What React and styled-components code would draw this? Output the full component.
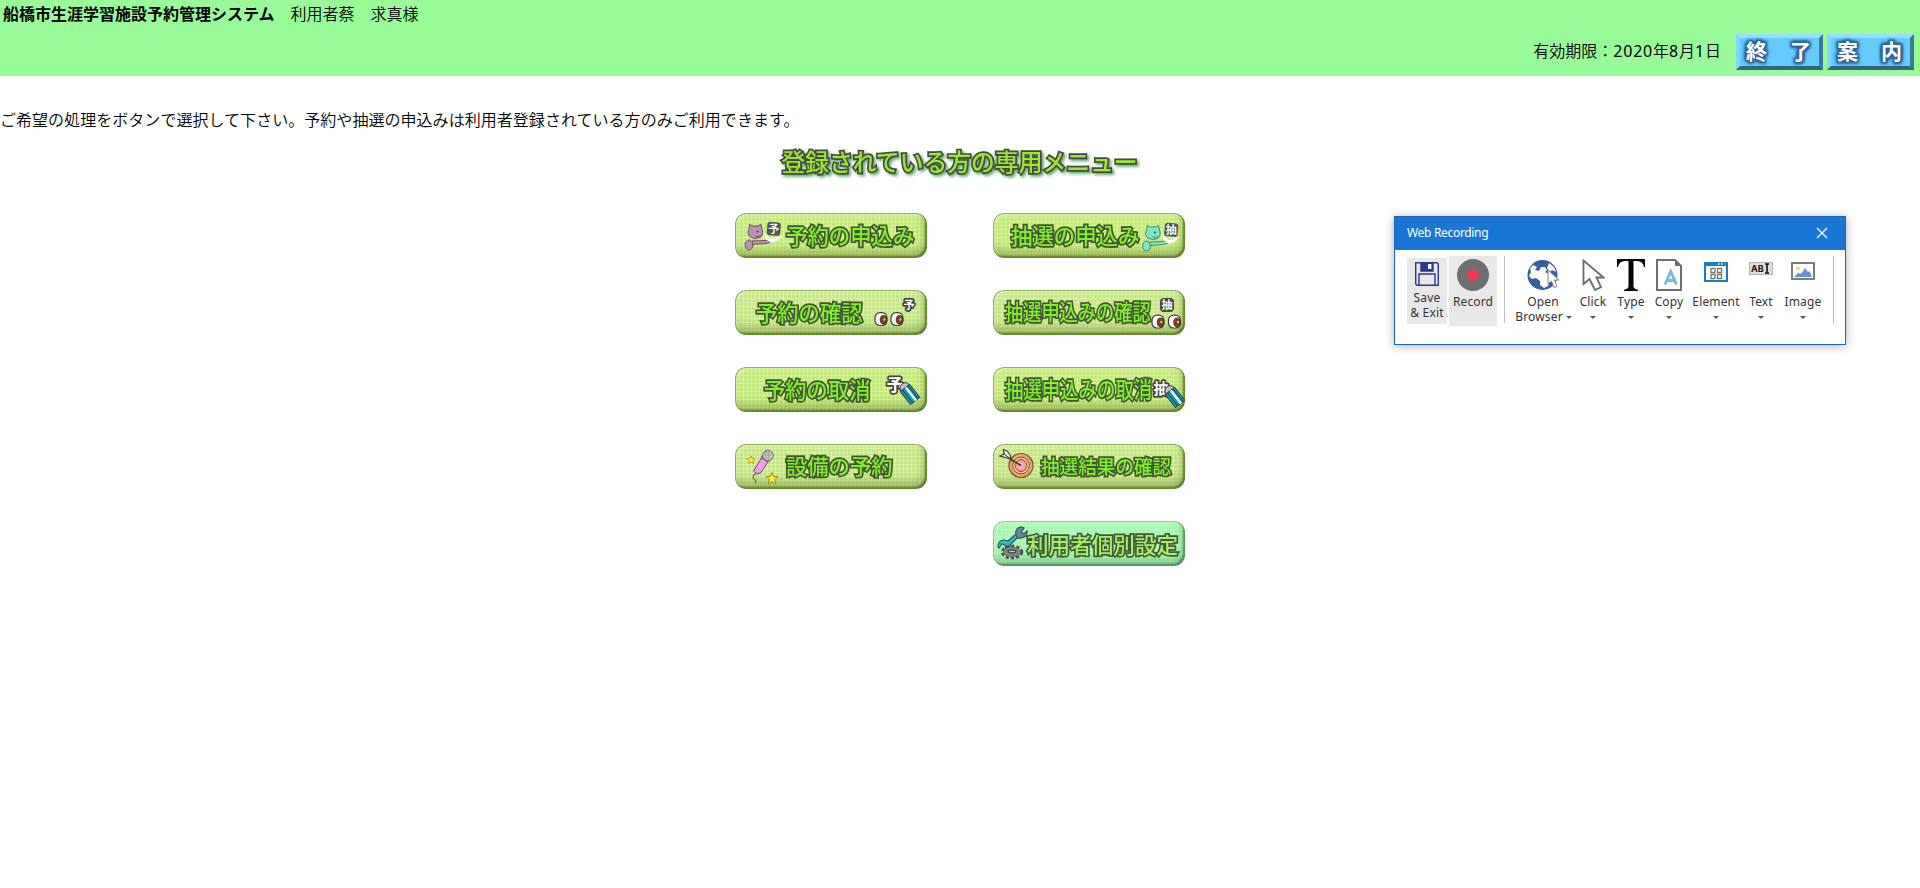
import React from 'react';
import styled, { createGlobalStyle } from 'styled-components';

const GlobalStyle = createGlobalStyle`
  html, body { margin: 0; padding: 0; background: #fff; }
  body {
    min-height: 888px;
    color: #000;
    font-family: "Noto Sans CJK JP", sans-serif;
    font-size: 16px;
    font-weight: 350;
    line-height: 24px;
    overflow: hidden;
  }
  button { font: inherit; margin: 0; padding: 0; }
`;

const Header = styled.header`
  box-sizing: border-box;
  height: 76px;
  padding: 1px 6px 6px 3px;
  background: #98fb98;
  display: flex;
  flex-direction: column;
  justify-content: space-between;
`;

const TitleRow = styled.div`
  display: flex;
  gap: 16px;
  white-space: pre;
`;

const SystemName = styled.strong`
  font-weight: 700;
`;

const SessionRow = styled.div`
  display: flex;
  justify-content: flex-end;
  align-items: center;
  gap: 4px;
`;

const Expiry = styled.span`
  margin-right: 11px;
  padding-bottom: 4px;
`;

const Digits = styled.span`
  font-family: "Noto Sans", sans-serif;
  font-weight: 400;
  letter-spacing: 0.8px;
`;

const BevelButton = styled.button`
  box-sizing: border-box;
  width: 87px;
  height: 36px;
  border: 4px solid;
  border-color: #99ddff #3d7a99 #336680 #84d6ff;
  background: #66ccff;
  display: flex;
  align-items: center;
  justify-content: space-between;
  padding: 0 8px 4px 6px;
  color: #fff;
  font-size: 21px;
  line-height: 28px;
  font-weight: 700;
  text-shadow: 0 0 2px #336699, 0 0 3px #336699, 1px 1px 2px #336699, -1px -1px 2px #336699,
    1px -1px 2px #336699, -1px 1px 2px #336699, 0 0 4px #336699, 2px 2px 3px #336699,
    2px -2px 3px #336699, -2px 2px 3px #336699, -2px -2px 3px #336699, 0 0 4px #336699;
`;

const Main = styled.main`
  display: flex;
  flex-direction: column;
`;

const Guide = styled.p`
  margin: 31px 0 0;
  letter-spacing: 0.04px;
`;

const MenuTitle = styled.h1`
  align-self: center;
  margin: 15px 1px 0 0;
  height: 30px;
  font-size: 23.8px;
  line-height: 30px;
  font-weight: 500;
  color: #99e633;
  -webkit-text-stroke: 3.4px #444b3d;
  paint-order: stroke fill;
  filter: drop-shadow(2px 2px 1.5px rgba(50, 140, 60, 0.75));
`;

const MenuGrid = styled.div`
  align-self: center;
  margin-top: 37px;
  display: grid;
  grid-template-columns: 192px 192px;
  grid-auto-rows: 45px;
  gap: 32px 66px;
`;

const MenuButton = styled.button`
  position: relative;
  grid-column: ${(p) => p.$col};
  width: 192px;
  height: 45px;
  border: 0;
  border-radius: 11px;
  text-align: left;
  background:
    repeating-linear-gradient(90deg, rgba(255,255,255,0.3) 0 1px, transparent 1px 4px),
    repeating-linear-gradient(0deg, rgba(255,255,255,0.3) 0 1px, transparent 1px 4px),
    ${(p) => (p.$mint ? '#a5f5b0' : '#c6e880')};
  box-shadow:
    inset 0 0 0 1px ${(p) => (p.$mint ? 'rgba(80,150,90,.5)' : 'rgba(95,145,40,.65)')},
    inset 2px 2px 3px rgba(255,255,255,0.45),
    inset -2px -2px 2px ${(p) => (p.$mint ? 'rgba(30,90,45,.55)' : 'rgba(55,85,15,.65)')},
    inset -3px -8px 8px ${(p) => (p.$mint ? 'rgba(65,120,75,.35)' : 'rgba(90,115,40,.42)')};
`;

const MenuLabel = styled.span`
  display: block;
  width: max-content;
  margin-left: ${(p) => p.$left}px;
  margin-top: ${(p) => p.$top - 2}px;
  font-size: ${(p) => p.$size}px;
  line-height: 30px;
  font-weight: 500;
  color: ${(p) => (p.$mint ? '#a8ee66' : '#7ef030')};
  -webkit-text-stroke: 3.4px ${(p) => (p.$mint ? '#3f5b3b' : '#425430')};
  paint-order: stroke fill;
  transform: scaleX(${(p) => p.$pitch / p.$size});
  transform-origin: left center;
`;

const Art = styled.svg`
  position: absolute;
  inset: 0;
  width: 192px;
  height: 45px;
  overflow: visible;
`;

const Stamp = styled.text`
  font-family: "Noto Sans CJK JP", sans-serif;
  font-weight: 700;
  fill: #fff;
  stroke: #444;
  stroke-width: ${(p) => p.$outline || 3.5}px;
  stroke-linejoin: round;
  paint-order: stroke fill;
  text-anchor: middle;
`;

const Mascot = ({ x = 0, y = 0, color, edge, mark }) => (
  <g transform={`translate(${x} ${y})`} stroke={edge} strokeWidth="1" strokeLinejoin="round">
    <path d="M17 28L30 27.5L36 26L37.5 28.5L31 30.5L17 31.5Z" fill={color} />
    <ellipse cx="14" cy="32" rx="3.8" ry="5" fill={color} />
    <path d="M14 16L14.5 11.5L18 13H22.5L26 11.5L27 16Q29 22 25 24.5Q20 27 15.5 24Q11.5 21 14 16Z" fill={color} />
    <path d="M20 23Q23 24.5 26 22.5" fill="none" />
    <circle cx="22.5" cy="18.5" r="0.9" fill="#333" stroke="none" />
    <path d="M29 19.5L32 23L36 26L47 23L41 28.5L36 29.5L31 26Z" fill="#fff" stroke="#e8efe0" />
    <rect x="32" y="9" width="13.5" height="13.5" rx="3" fill="#555" stroke="none" transform="rotate(5 38 16)" />
    <Stamp x="38.7" y="19.8" fontSize="11" $outline={0.5}>{mark}</Stamp>
  </g>
);

const Eyes = ({ x, y, gap }) => (
  <g>
    {[0, gap].map((dx) => (
      <g key={dx} transform={`translate(${x + dx} ${y})`}>
        <rect x="-6" y="-6.3" width="12" height="12.8" rx="5" fill="#fff" stroke="#3a4035" strokeWidth="1.2" />
        <ellipse cx="2.5" cy="0.8" rx="3.3" ry="4.4" fill="#824018" stroke="#312014" strokeWidth="0.7" />
        <rect x="2.6" y="-0.6" width="1.6" height="2.2" rx="0.6" fill="#fff" />
      </g>
    ))}
  </g>
);

const Eraser = ({ x, y }) => (
  <g transform={`translate(${x} ${y}) rotate(-38)`} stroke="#334" strokeWidth="0.9">
    <path d="M-5.5 0Q-4 -5 0 -5Q5 -5 5.5 0Z" fill="#bfc3c3" />
    <rect x="-6" y="0" width="12" height="16.5" fill="#15979d" />
    <rect x="-0.2" y="0" width="2.4" height="16.5" fill="#fff" stroke="none" />
    <path d="M-3.2 0V16.5M3.8 0V16.5" stroke="#083f66" />
  </g>
);

const Star = ({ x, y, s }) => (
  <path
    transform={`translate(${x} ${y}) scale(${s})`}
    d="M0 -6L1.7 -2L6 -1.8L2.7 1L3.8 5.4L0 3L-3.8 5.4L-2.7 1L-6 -1.8L-1.7 -2Z"
    fill="#ffed39"
    stroke="#a38a17"
    strokeWidth="1"
  />
);

const Microphone = () => (
  <g>
    <path d="M22 29Q16 32 19 35Q22 37 20 39" fill="none" stroke="#666" strokeWidth="1.2" />
    <path d="M26.5 14L33 18L25.5 29Q21 31 18.5 27Z" fill="#ff9bef" stroke="#555" />
    <path d="M26 13L29 10L36 15L33 18.5Z" fill="#aaa" stroke="#555" strokeWidth=".7" />
    <circle cx="33" cy="11.5" r="5.3" fill="#d5d5cf" stroke="#666" />
    <path d="M28 11H38M29 8.5H37M29 14H37M31 6.5V16M34 6.5V16" stroke="#888" strokeWidth=".6" />
    <Star x={16} y={16} s={0.7} />
    <Star x={37} y={34.5} s={1} />
  </g>
);

const Target = () => (
  <g fill="none">
    <circle cx="28" cy="21.5" r="12" fill="#ff9b66" stroke="#665442" strokeWidth="1.2" />
    <circle cx="28" cy="21.5" r="8.3" fill="#ffd9a0" stroke="#665442" />
    <circle cx="28" cy="21.5" r="6" fill="#ff9b66" stroke="#665442" />
    <circle cx="28" cy="21.5" r="3.4" fill="#ffa6cc" stroke="#ffa6cc" />
    <path d="M17 15L28 21.5" stroke="#333" strokeWidth="1.5" />
    <path d="M18 15L7 12L11 10L10.5 5.5Q17 7 18 15Z" fill="#edf5df" stroke="#333" strokeWidth="1.2" />
    <path d="M11 10L18 15" stroke="#333" />
  </g>
);

const Tools = () => (
  <g>
    <path
      d="M5 26Q5 19 11 19L15 20L23 13Q22 7 28 6L31 7L28 11L31 13L34 10Q34 17 27 17L24 17L17 24Q18 29 13 28L12 24L9 23L6 27Z"
      fill="#2dbbc5"
      stroke="#36535a"
      strokeWidth="1.2"
    />
    <path d="M23 13Q22 7 28 6L31 7L28 11L31 13L34 10Q34 17 27 17L24 17Z" fill="#608b96" stroke="#36535a" />
    <ellipse cx="19" cy="31" rx="9.5" ry="5.6" fill="none" stroke="#444c4c" strokeWidth="3.5" strokeDasharray="3 2" />
    <ellipse cx="19" cy="31" rx="8.5" ry="4.8" fill="#7c8585" stroke="#666e6e" strokeWidth="1" />
    <ellipse cx="19" cy="30.5" rx="4" ry="1.3" fill="#a7d9a9" stroke="#3d4545" strokeWidth="1.3" />
  </g>
);

const MENU = [
  { col: 1, text: '予約の申込み', left: 51, top: 0, size: 21.5, pitch: 21.4,
    art: <Mascot color="#bb92b2" edge="#69505f" mark="予" /> },
  { col: 2, text: '抽選の申込み', left: 18, top: 0, size: 21.5, pitch: 21.4,
    art: <Mascot x={139.5} y={1} color="#7de8c4" edge="#45886e" mark="抽" /> },
  { col: 1, text: '予約の確認', left: 21, top: 1, size: 21.5, pitch: 21.3,
    art: <><Eyes x={146} y={29} gap={16} /><Stamp x="174" y="19" fontSize="11">予</Stamp></> },
  { col: 2, text: '抽選申込みの確認', left: 12, top: -1, size: 21.5, pitch: 18.2,
    art: <><rect x="167" y="8" width="14" height="14" rx="4" fill="#444b3c" /><Stamp x="174" y="19" fontSize="11" $outline={0.6}>抽</Stamp><Eyes x={165} y={31.5} gap={16.5} /></> },
  { col: 1, text: '予約の取消', left: 29, top: 1, size: 21.5, pitch: 21.3,
    art: <><Stamp x="160" y="23.5" fontSize="17">予</Stamp><Eraser x={170} y={21} /></> },
  { col: 2, text: '抽選申込みの取消', left: 12, top: -1, size: 22.5, pitch: 18.4,
    art: <><Stamp x="168" y="26.5" fontSize="15">抽</Stamp><Eraser x={177} y={24} /></> },
  { col: 1, text: '設備の予約', left: 51, top: -1, size: 21, pitch: 21.3, art: <Microphone /> },
  { col: 2, text: '抽選結果の確認', left: 48, top: 0, size: 19.5, pitch: 18.6, art: <Target /> },
  { col: 2, text: '利用者個別設定', left: 34, top: 2, size: 21.7, pitch: 21.6, mint: true, art: <Tools /> },
];

const RecorderWindow = styled.section`
  position: absolute;
  left: 1394px;
  top: 216px;
  box-sizing: border-box;
  width: 452px;
  height: 129px;
  border: 1px solid #1769b5;
  background: #fff;
  box-shadow: 0 1px 9px rgba(0, 0, 0, 0.32);
  font-family: "Noto Sans", sans-serif;
  font-weight: 400;
  font-size: 12px;
  line-height: 15px;
  color: #333;
`;

const RecorderTitle = styled.div`
  box-sizing: border-box;
  height: 33px;
  padding: 0 17px 2px 12px;
  background: #1976d4;
  color: #fff;
  display: flex;
  align-items: center;
  justify-content: space-between;
`;

const WindowName = styled.span`
  letter-spacing: -0.32px;
`;

const Toolbar = styled.div`
  display: flex;
  align-items: flex-start;
  padding: 6px 0 0 12px;
`;

const Tool = styled.div`
  box-sizing: border-box;
  width: ${(p) => p.$w}px;
  height: ${(p) => p.$h || 70}px;
  margin: ${(p) => p.$margin || '0'};
  padding-top: ${(p) => p.$pad ?? 3}px;
  background: ${(p) => (p.$active ? '#e8e8e8' : 'transparent')};
  display: flex;
  flex-direction: column;
  align-items: center;
  white-space: nowrap;
  letter-spacing: 0.15px;
`;

const IconSlot = styled.span`
  height: ${(p) => p.$h || 35}px;
  display: flex;
  align-items: flex-start;
  svg { display: block; }
`;

const Separator = styled.span`
  width: 1px;
  height: 67px;
  margin-left: ${(p) => p.$gap}px;
  background: #bdbdbd;
`;

const Caret = styled.span`
  width: 0;
  height: 0;
  margin-top: ${(p) => (p.$inline ? 1 : 7)}px;
  margin-left: ${(p) => (p.$inline ? 3 : 0)}px;
  border: 3px solid transparent;
  border-top-color: #555;
  border-bottom: 0;
`;

const CaptionRow = styled.span`
  display: flex;
  align-items: center;
  padding-left: 1px;
`;

const CloseIcon = () => (
  <svg width="12" height="12" viewBox="0 0 12 12"><path d="M1 1L11 11M11 1L1 11" stroke="#fff" strokeWidth="1.2" /></svg>
);

const SaveIcon = () => (
  <svg width="24" height="24" viewBox="0 0 24 24" fill="none" stroke="#2d398f" strokeWidth="1.4">
    <path d="M.7 .7H22L23.3 2V23.3H2L.7 22Z" />
    <path d="M6 .7H18V9H6Z" fill="#2d398f" />
    <rect x="13" y="2" width="3.4" height="5" fill="#fff" stroke="none" />
    <path d="M4 23V12H20V23" />
  </svg>
);

const RecordIcon = () => (
  <svg width="32" height="32"><circle cx="16" cy="16" r="16" fill="#6e6f71" /><circle cx="16" cy="16" r="6" fill="#f0384f" /></svg>
);

const GlobeIcon = () => (
  <svg width="32" height="32" viewBox="0 0 32 32">
    <circle cx="15.5" cy="16" r="15" fill="#355f9e" />
    <path d="M3 9L6 6L10 8L8 11L12 12L14 8L18 8L20 11L18 13L22 15L24 19L21 27L17 29L13 26L13 22L9 19L5 20L2 17L4 13Z" fill="#fff" />
    <path d="M22 4L27 8L29 13L25 11L23 13L20 9Z" fill="#fff" />
    <path d="M21 11V25L24.5 22L27 28.5L30 27.5L27.5 21L32 21Z" fill="#fff" stroke="#7e8790" strokeWidth="1" />
  </svg>
);

const PointerIcon = () => (
  <svg width="23" height="32" viewBox="0 0 23 32"><path d="M1.5 1.5V25L7.5 20L13 31L19 28L14.5 18.5H21.5Z" fill="#fff" stroke="#6b6c6e" strokeWidth="1.8" /></svg>
);

const TypeIcon = () => (
  <svg width="28" height="32" viewBox="0 0 28 32"><path d="M0 0H28L28.3 8H27Q26 2 20 2H16.5V27Q16.5 30.3 21 30.7V32H7V30.7Q11.5 30.3 11.5 27V2H8Q2 2 1 8H-.3Z" fill="#050505" /></svg>
);

const CopyIcon = () => (
  <svg width="26" height="32" viewBox="0 0 26 32" fill="none">
    <path d="M1 1H19L25 7V31H1Z" fill="#fff" stroke="#6d6e70" strokeWidth="2" />
    <path d="M19 1V7H25Z" fill="#6d6e70" />
    <path d="M9 25.5L14.7 12.5L20.5 25.5M11 21.5H18.5" stroke="#76bae3" strokeWidth="2.8" />
  </svg>
);

const ElementIcon = () => (
  <svg width="24" height="26" viewBox="0 0 24 26" fill="none">
    <rect x="1" y="4" width="22" height="18" fill="#fff" stroke="#1380bd" strokeWidth="2" />
    <path d="M0 5H24" stroke="#1380bd" strokeWidth="4" />
    <path d="M14 5H19" stroke="#fff" strokeWidth="1.4" strokeDasharray="1.5 1.5" />
    <path d="M20 5H22" stroke="#f04b55" strokeWidth="2" />
    <path d="M7 9.5H11V13.5H7ZM13.5 9.5H17.5V13.5H13.5ZM7 15.5H11V19.5H7ZM13.5 15.5H17.5V19.5H13.5Z" stroke="#777" strokeWidth="1.3" />
  </svg>
);

const Abi = styled.text`
  font-family: Inter, sans-serif;
  font-size: 9px;
  font-weight: 700;
  fill: #111;
  letter-spacing: 0;
`;

const TextIcon = () => (
  <svg width="24" height="20" viewBox="0 0 24 20">
    <rect x=".5" y="3.5" width="23" height="12" fill="#ddd" stroke="#b2b2ab" />
    <Abi x="2" y="12.8">AB</Abi>
    <path d="M16 5H20M16 14H20M18 5V14" stroke="#111" strokeWidth="1.6" />
  </svg>
);

const ImageIcon = () => (
  <svg width="24" height="22" viewBox="0 0 24 22">
    <rect x="1" y="4" width="22" height="16" fill="#fff" stroke="#6d6e70" strokeWidth="1.8" />
    <circle cx="7" cy="9.5" r="2" fill="#f4d969" />
    <path d="M3 18L7 14L10 15L14 9L17 13L18.5 12L21 18Z" fill="#6693d0" />
  </svg>
);

const DROPDOWN_TOOLS = [
  { name: 'Click', w: 38, icon: <PointerIcon /> },
  { name: 'Type', w: 38, icon: <TypeIcon /> },
  { name: 'Copy', w: 38, icon: <CopyIcon /> },
  { name: 'Element', w: 56, icon: <ElementIcon /> },
  { name: 'Text', w: 34, icon: <TextIcon /> },
  { name: 'Image', w: 50, icon: <ImageIcon /> },
];

export default function App() {
  return (
    <>
      <GlobalStyle />
      <Header>
        <TitleRow>
          <SystemName>船橋市生涯学習施設予約管理システム</SystemName>
          <span>利用者蔡　求真様</span>
        </TitleRow>
        <SessionRow>
          <Expiry>
            有効期限：<Digits>2020</Digits>年<Digits>8</Digits>月<Digits>1</Digits>日
          </Expiry>
          <BevelButton><span>終</span><span>了</span></BevelButton>
          <BevelButton><span>案</span><span>内</span></BevelButton>
        </SessionRow>
      </Header>
      <Main>
        <Guide>ご希望の処理をボタンで選択して下さい。予約や抽選の申込みは利用者登録されている方のみご利用できます。</Guide>
        <MenuTitle>登録されている方の専用メニュー</MenuTitle>
        <MenuGrid>
          {MENU.map((m) => (
            <MenuButton key={m.text} $col={m.col} $mint={m.mint}>
              <MenuLabel $left={m.left} $top={m.top} $size={m.size} $pitch={m.pitch} $mint={m.mint}>
                {m.text}
              </MenuLabel>
              <Art viewBox="0 0 192 45">{m.art}</Art>
            </MenuButton>
          ))}
        </MenuGrid>
      </Main>
      <RecorderWindow>
        <RecorderTitle>
          <WindowName>Web Recording</WindowName>
          <CloseIcon />
        </RecorderTitle>
        <Toolbar>
          <Tool $w={40} $h={66} $margin="2px 2px 0 0" $pad={4} $active>
            <IconSlot $h={28}><SaveIcon /></IconSlot>
            <span>Save</span>
            <span>&amp; Exit</span>
          </Tool>
          <Tool $w={48} $active>
            <IconSlot><RecordIcon /></IconSlot>
            <span>Record</span>
          </Tool>
          <Separator $gap={7} />
          <Tool $w={62} $margin="0 0 0 7px">
            <IconSlot><GlobeIcon /></IconSlot>
            <span>Open</span>
            <CaptionRow>Browser<Caret $inline /></CaptionRow>
          </Tool>
          {DROPDOWN_TOOLS.map((t) => (
            <Tool key={t.name} $w={t.w}>
              <IconSlot>{t.icon}</IconSlot>
              <span>{t.name}</span>
              <Caret />
            </Tool>
          ))}
          <Separator $gap={5} />
        </Toolbar>
      </RecorderWindow>
    </>
  );
}
